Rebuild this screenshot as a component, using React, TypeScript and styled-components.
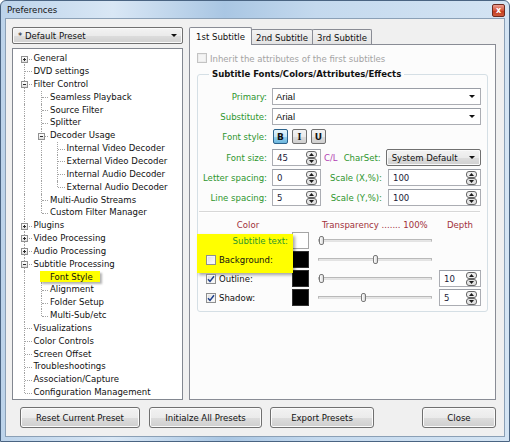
import styled, { createGlobalStyle } from 'styled-components';

const FONT = `"DejaVu Sans Condensed", "DejaVu Sans", "Liberation Sans", sans-serif`;

const GlobalStyle = createGlobalStyle`
  * { box-sizing: border-box; }
  html, body { margin: 0; padding: 0; background: #ffffff; }
  body { font-family: ${FONT}; font-size: 9.5px; color: #111111; }
`;

type Node = { level: number; label: string; toggle?: 'plus' | 'minus'; marked?: boolean };

const TREE: Node[] = [
  { level: 0, label: 'General', toggle: 'plus' },
  { level: 0, label: 'DVD settings' },
  { level: 0, label: 'Filter Control', toggle: 'minus' },
  { level: 1, label: 'Seamless Playback' },
  { level: 1, label: 'Source Filter' },
  { level: 1, label: 'Splitter' },
  { level: 1, label: 'Decoder Usage', toggle: 'minus' },
  { level: 2, label: 'Internal Video Decoder' },
  { level: 2, label: 'External Video Decoder' },
  { level: 2, label: 'Internal Audio Decoder' },
  { level: 2, label: 'External Audio Decoder' },
  { level: 1, label: 'Multi-Audio Streams' },
  { level: 1, label: 'Custom Filter Manager' },
  { level: 0, label: 'Plugins', toggle: 'plus' },
  { level: 0, label: 'Video Processing', toggle: 'plus' },
  { level: 0, label: 'Audio Processing', toggle: 'plus' },
  { level: 0, label: 'Subtitle Processing', toggle: 'minus' },
  { level: 1, label: 'Font Style', marked: true },
  { level: 1, label: 'Alignment' },
  { level: 1, label: 'Folder Setup' },
  { level: 1, label: 'Multi-Sub/etc' },
  { level: 0, label: 'Visualizations' },
  { level: 0, label: 'Color Controls' },
  { level: 0, label: 'Screen Offset' },
  { level: 0, label: 'Troubleshootings' },
  { level: 0, label: 'Association/Capture' },
  { level: 0, label: 'Configuration Management' },
];

// does the row at idx have a later sibling (same level, same parent)?
const hasNext = (idx: number) => {
  const lv = TREE[idx].level;
  for (let j = idx + 1; j < TREE.length; j++) {
    if (TREE[j].level < lv) return false;
    if (TREE[j].level === lv) return true;
  }
  return false;
};

const ancestorGoesOn = (idx: number, level: number) => {
  let a = idx - 1;
  while (a >= 0 && TREE[a].level !== level) a--;
  return a >= 0 && hasNext(a);
};

const COLOR_ROWS = [
  { label: 'Subtitle text:', check: null as boolean | null, swatch: '#ffffff', pos: 0, depth: '' },
  { label: 'Background:', check: false, swatch: '#000000', pos: 47, depth: '' },
  { label: 'Outline:', check: true, swatch: '#000000', pos: 0, depth: '10' },
  { label: 'Shadow:', check: true, swatch: '#000000', pos: 37, depth: '5' },
];

const Window = styled.div`
  width: 510px;
  height: 442px;
  display: flex;
  flex-direction: column;
  border: 1px solid #4a6482;
  border-radius: 6px 6px 0 0;
  padding: 0 4px 4px 4px;
  background: linear-gradient(90deg, #bcd3ea 0%, #d9e7f5 22%, #a9c6e3 44%, #c4d9ee 62%, #d4e4f3 100%);
`;

const TitleBar = styled.div`
  height: 17px;
  display: flex;
  align-items: flex-start;
  justify-content: space-between;
  padding: 3px 0 0 2px;
`;

const Title = styled.span`
  font-size: 9.5px;
  color: #111;
`;

const CloseButton = styled.span`
  width: 13px;
  height: 13px;
  display: flex;
  align-items: center;
  justify-content: center;
  border: 1px solid #6e2b20;
  border-radius: 2px;
  background: linear-gradient(#eba093, #d5553a 50%, #c23a1c 51%, #cf5a3c);
  color: #fff;
  font-family: "DejaVu Sans", sans-serif;
  font-size: 8px;
  font-weight: bold;
  line-height: 1;
`;

const Client = styled.div`
  flex: 1;
  display: flex;
  flex-direction: column;
  gap: 7px;
  padding: 8px 8px 8px 6px;
  background: #f0f0f0;
  border: 1px solid #8ba0b6;
`;

const MainRow = styled.div`
  flex: 1;
  display: flex;
  gap: 6px;
  min-height: 0;
`;

const LeftColumn = styled.div`
  width: 171px;
  display: flex;
  flex-direction: column;
  gap: 4px;
`;

const Arrow = styled.span`
  width: 0;
  height: 0;
  border-left: 3px solid transparent;
  border-right: 3px solid transparent;
  border-top: 3px solid #111;
`;

const ButtonCombo = styled.div<{ $ml?: number }>`
  flex: 1;
  height: 17px;
  margin-left: ${p => p.$ml ?? 0}px;
  display: flex;
  align-items: center;
  justify-content: space-between;
  padding: 0 5px;
  border: 1px solid #707070;
  border-radius: 2px;
  background: linear-gradient(#f3f3f3 0%, #ebebeb 50%, #dddddd 51%, #d0d0d0 100%);
  box-shadow: inset 0 0 0 1px #fafafa;
  color: #111;
`;

const TextCombo = styled.div`
  flex: 1;
  height: 17px;
  display: flex;
  align-items: center;
  justify-content: space-between;
  padding: 0 5px 0 3px;
  background: #ffffff;
  border: 1px solid #abadb3;
  border-top-color: #9a9ea6;
  color: #111;
  font-family: "Liberation Sans", sans-serif;
`;

const TreeBox = styled.div`
  flex: 1;
  background: #ffffff;
  border: 1px solid #828790;
  padding: 3px 0 0 3px;
`;

const TreeRow = styled.div`
  height: 12.85px;
  display: flex;
  align-items: stretch;
  line-height: 12.85px;
  white-space: nowrap;
`;

const Guide = styled.span<{ $up?: boolean; $down?: boolean; $branch?: boolean }>`
  position: relative;
  flex: none;
  width: 16.5px;

  &::before {
    content: '';
    display: ${p => (p.$up || p.$down ? 'block' : 'none')};
    position: absolute;
    left: 8px;
    top: ${p => (p.$up ? '0' : '50%')};
    bottom: ${p => (p.$down ? '0' : '50%')};
    border-left: 1px dotted #a3a3a3;
  }

  &::after {
    content: '';
    display: ${p => (p.$branch ? 'block' : 'none')};
    position: absolute;
    left: 9px;
    right: 1px;
    top: 50%;
    border-top: 1px dotted #a3a3a3;
  }
`;

const Expander = styled.span<{ $open: boolean }>`
  position: absolute;
  z-index: 1;
  left: 5px;
  top: calc(50% - 3px);
  width: 7px;
  height: 7px;
  border: 1px solid #919191;
  background: linear-gradient(#ffffff, #dedede);

  &::before {
    content: '';
    position: absolute;
    left: 1px;
    right: 1px;
    top: 2px;
    border-top: 1px solid #2b2b2b;
  }

  &::after {
    content: '';
    display: ${p => (p.$open ? 'none' : 'block')};
    position: absolute;
    top: 1px;
    bottom: 1px;
    left: 2px;
    border-left: 1px solid #2b2b2b;
  }
`;

const TreeLabel = styled.span<{ $marked?: boolean }>`
  position: relative;
  z-index: 2;
  padding-left: 1px;
  color: #111;
  ${p =>
    p.$marked &&
    `
    align-self: center;
    height: 11px;
    line-height: 11px;
    margin-left: -9px;
    padding: 0 7px 0 10px;
    background: #ffff00;
    box-shadow: 2px 2px 2px rgba(0, 0, 0, 0.3);
  `}
`;

const RightColumn = styled.div`
  flex: 1;
  display: flex;
  flex-direction: column;
`;

const TabStrip = styled.div`
  height: 17px;
  display: flex;
  align-items: flex-end;
  position: relative;
  z-index: 1;
`;

const Tab = styled.div<{ $active?: boolean; $w: number }>`
  width: ${p => p.$w}px;
  height: ${p => (p.$active ? 18 : 15)}px;
  margin-bottom: ${p => (p.$active ? -1 : 0)}px;
  margin-left: ${p => (p.$active ? 0 : -1)}px;
  display: flex;
  align-items: center;
  justify-content: center;
  padding-top: ${p => (p.$active ? 0 : 1)}px;
  border: 1px solid #898c95;
  border-bottom: none;
  border-radius: 2px 2px 0 0;
  background: ${p => (p.$active ? '#fcfcfc' : 'linear-gradient(#f3f3f3, #e3e3e3)')};
  color: #111;

  &:first-child {
    margin-left: 0;
  }
`;

const TabPanel = styled.div`
  flex: 1;
  display: flex;
  flex-direction: column;
  padding: 8px 7px 0 7px;
  background: #fcfcfc;
  border: 1px solid #898c95;
`;

const CheckRow = styled.label<{ $disabled?: boolean }>`
  display: flex;
  align-items: center;
  gap: 3px;
  height: 10px;
  color: ${p => (p.$disabled ? '#a3a3a3' : '#111')};
`;

const Box = styled.span<{ $disabled?: boolean }>`
  width: 10px;
  height: 10px;
  flex: none;
  display: flex;
  align-items: center;
  justify-content: center;
  border: 1px solid ${p => (p.$disabled ? '#c3c3c3' : '#8e8f8f')};
  background: ${p => (p.$disabled ? '#f4f4f4' : 'linear-gradient(135deg, #dcdcdc, #ffffff)')};
  box-shadow: inset 0 0 0 1px ${p => (p.$disabled ? '#ececec' : '#f4f4f4')};
`;

const GroupBox = styled.fieldset`
  margin: 5px 0 0 0;
  padding: 0 6px 4px 0;
  min-width: 0;
  border: 1px solid #d5dfe5;
  border-radius: 3px;
`;

const Legend = styled.legend`
  margin-left: 11px;
  padding: 0 3px;
  line-height: 12px;
  font-weight: bold;
  font-size: 9.5px;
  color: #111;
`;

const FieldRow = styled.div<{ $top: number; $h?: number }>`
  display: flex;
  align-items: center;
  height: ${p => p.$h ?? 17}px;
  margin-top: ${p => p.$top}px;
`;

const FieldLabel = styled.span<{ $w?: number; $gap?: number }>`
  flex: none;
  width: ${p => p.$w ?? 69}px;
  margin-right: ${p => p.$gap ?? 5}px;
  text-align: right;
  color: #2e962e;
  white-space: nowrap;
`;

const StyleRow = styled.div`
  display: flex;
  gap: 4px;
  padding-left: 1px;
`;

const StyleButton = styled.span<{ $pressed?: boolean; $serif?: boolean }>`
  width: 15px;
  height: 15px;
  display: flex;
  align-items: center;
  justify-content: center;
  border: 1px solid ${p => (p.$pressed ? '#2c628b' : '#707070')};
  border-radius: 2px;
  background: ${p =>
    p.$pressed
      ? 'linear-gradient(#e5f4fc 0%, #c4e5f6 50%, #98d1ef 51%, #6cb6dd 100%)'
      : 'linear-gradient(#f3f3f3 0%, #ebebeb 50%, #dddddd 51%, #cfcfcf 100%)'};
  font-family: ${p => (p.$serif ? '"Liberation Serif", serif' : '"DejaVu Sans", sans-serif')};
  font-weight: bold;
  font-size: ${p => (p.$serif ? 10 : 9)}px;
  color: #111;
`;

const SpinField = styled.div<{ $w?: number }>`
  height: 17px;
  ${p => (p.$w ? `width: ${p.$w}px; flex: none;` : 'flex: 1;')}
  display: flex;
  align-items: center;
  justify-content: space-between;
  padding: 0 3px 0 4px;
  background: #ffffff;
  border: 1px solid #abadb3;
  border-top-color: #9a9ea6;
  color: #1a1a38;
`;

const Note = styled.span<{ $color: string; $left: number }>`
  margin-left: ${p => p.$left}px;
  color: ${p => p.$color};
  white-space: nowrap;
`;

const Separator = styled.div`
  margin: 5px 1px 0 1px;
  height: 2px;
  border-top: 1px solid #d7d7d7;
  border-bottom: 1px solid #ffffff;
`;

const ColorGrid = styled.div`
  position: relative;
  margin-top: 5px;
  display: grid;
  grid-template-columns: 94px 26px 121px 42px;
  grid-template-rows: 13px repeat(4, 19px);
  align-items: center;
`;

const Head = styled.span<{ $align: 'left' | 'center'; $pad?: number }>`
  text-align: ${p => p.$align};
  padding-left: ${p => p.$pad ?? 0}px;
  color: #a1303a;
  white-space: nowrap;
`;

const Highlight = styled.div`
  position: absolute;
  left: -1px;
  top: 16px;
  width: 96px;
  height: 39px;
  background: #ffff00;
  box-shadow: 2px 2px 3px rgba(0, 0, 0, 0.35);
`;

const ColorLabel = styled.div<{ $right?: boolean }>`
  position: relative;
  z-index: 2;
  display: flex;
  align-items: center;
  gap: 3px;
  justify-content: ${p => (p.$right ? 'flex-end' : 'flex-start')};
  padding: ${p => (p.$right ? '0 4px 0 0' : '0 0 0 8px')};
  color: ${p => (p.$right ? '#2e962e' : '#111')};
  white-space: nowrap;
`;

const Swatch = styled.span<{ $fill: string }>`
  width: 17px;
  height: 17px;
  background: ${p => p.$fill};
  border: 1px solid ${p => (p.$fill === '#ffffff' ? '#a5a5a5' : '#303030')};
`;

const Slider = styled.div`
  position: relative;
  width: 114px;
  height: 11px;
`;

const Track = styled.span`
  position: absolute;
  left: 0;
  right: 0;
  top: 4px;
  height: 3px;
  border: 1px solid #b9b9b9;
  border-bottom-color: #e3e3e3;
  background: #e6e6e6;
`;

const Thumb = styled.span`
  position: absolute;
  top: 1px;
  width: 5px;
  height: 9px;
  margin-left: 1px;
  border: 1px solid #7a7a7a;
  border-radius: 2px;
  background: linear-gradient(90deg, #ffffff, #d8d8d8);
`;

const ButtonBar = styled.div`
  height: 21px;
  display: flex;
  padding-left: 8px;
`;

const PushButton = styled.button<{ $w: number; $gap?: number; $push?: boolean }>`
  width: ${p => p.$w}px;
  height: 21px;
  margin-left: ${p => (p.$push ? 'auto' : `${p.$gap ?? 0}px`)};
  padding: 0;
  border: 1px solid #707070;
  border-radius: 3px;
  background: linear-gradient(#f2f2f2 0%, #ebebeb 50%, #dddddd 51%, #cfcfcf 100%);
  box-shadow: inset 0 0 0 1px #fbfbfb;
  font-family: ${FONT};
  font-size: 9.5px;
  color: #111;
`;

const SpinIcon = () => (
  <svg width="11" height="14" viewBox="0 0 11 14">
    <rect x="0.5" y="0.5" width="10" height="6" rx="2.5" fill="#ececec" stroke="#666" />
    <rect x="0.5" y="7.5" width="10" height="6" rx="2.5" fill="#e2e2e2" stroke="#666" />
    <path d="M3 5 L5.5 2 L8 5 Z" fill="#1a1a1a" />
    <path d="M3 9 L5.5 12 L8 9 Z" fill="#1a1a1a" />
  </svg>
);

const Tick = () => (
  <svg width="8" height="8" viewBox="0 0 8 8">
    <path d="M1 4.2 L3 6.4 L7 1.2" fill="none" stroke="#1d3f8c" strokeWidth="1.5" />
  </svg>
);

const Spin = ({ value, w }: { value: string; w?: number }) => (
  <SpinField $w={w}>
    <span>{value}</span>
    <SpinIcon />
  </SpinField>
);

function Tree() {
  return (
    <TreeBox>
      {TREE.map((node, i) => {
        const guides = [];
        for (let k = 0; k < node.level; k++) {
          const on = ancestorGoesOn(i, k);
          guides.push(<Guide key={k} $up={on} $down={on} />);
        }
        return (
          <TreeRow key={node.label}>
            {guides}
            <Guide $up={i > 0} $down={hasNext(i)} $branch>
              {node.toggle && <Expander $open={node.toggle === 'minus'} />}
            </Guide>
            <TreeLabel $marked={node.marked}>{node.label}</TreeLabel>
          </TreeRow>
        );
      })}
    </TreeBox>
  );
}

function ColorRowCells(row: (typeof COLOR_ROWS)[number]) {
  return (
    <>
      <ColorLabel $right={row.check === null}>
        {row.check !== null && <Box>{row.check && <Tick />}</Box>}
        {row.label}
      </ColorLabel>
      <Swatch $fill={row.swatch} />
      <Slider>
        <Track />
        <Thumb style={{ left: `${row.pos}%` }} />
      </Slider>
      {row.depth ? <Spin value={row.depth} w={42} /> : <span />}
    </>
  );
}

export default function App() {
  return (
    <>
      <GlobalStyle />
      <Window>
        <TitleBar>
          <Title>Preferences</Title>
          <CloseButton>x</CloseButton>
        </TitleBar>
        <Client>
          <MainRow>
            <LeftColumn>
              <ButtonCombo>
                <span>* Default Preset</span>
                <Arrow />
              </ButtonCombo>
              <Tree />
            </LeftColumn>

            <RightColumn>
              <TabStrip>
                <Tab $active $w={63}>1st Subtitle</Tab>
                <Tab $w={62}>2nd Subtitle</Tab>
                <Tab $w={60}>3rd Subtitle</Tab>
              </TabStrip>
              <TabPanel>
                <CheckRow $disabled>
                  <Box $disabled />
                  Inherit the attributes of the first subtitles
                </CheckRow>

                <GroupBox>
                  <Legend>Subtitle Fonts/Colors/Attributes/Effects</Legend>
                  <FieldRow $top={8}>
                    <FieldLabel>Primary:</FieldLabel>
                    <TextCombo>
                      <span>Arial</span>
                      <Arrow />
                    </TextCombo>
                  </FieldRow>
                  <FieldRow $top={3}>
                    <FieldLabel>Substitute:</FieldLabel>
                    <TextCombo>
                      <span>Arial</span>
                      <Arrow />
                    </TextCombo>
                  </FieldRow>
                  <FieldRow $top={4} $h={15}>
                    <FieldLabel>Font style:</FieldLabel>
                    <StyleRow>
                      <StyleButton $pressed>B</StyleButton>
                      <StyleButton $serif>I</StyleButton>
                      <StyleButton>U</StyleButton>
                    </StyleRow>
                  </FieldRow>
                  <FieldRow $top={5}>
                    <FieldLabel>Font size:</FieldLabel>
                    <Spin value="45" w={49} />
                    <Note $color="#b23cb2" $left={3}>C/L</Note>
                    <Note $color="#2e962e" $left={6}>CharSet:</Note>
                    <ButtonCombo $ml={5}>
                      <span>System Default</span>
                      <Arrow />
                    </ButtonCombo>
                  </FieldRow>
                  <FieldRow $top={3}>
                    <FieldLabel>Letter spacing:</FieldLabel>
                    <Spin value="0" w={49} />
                    <FieldLabel $w={61} $gap={6}>Scale (X,%):</FieldLabel>
                    <Spin value="100" />
                  </FieldRow>
                  <FieldRow $top={3}>
                    <FieldLabel>Line spacing:</FieldLabel>
                    <Spin value="5" w={49} />
                    <FieldLabel $w={61} $gap={6}>Scale (Y,%):</FieldLabel>
                    <Spin value="100" />
                  </FieldRow>

                  <Separator />

                  <ColorGrid>
                    <Head $align="center" $pad={6}>Color</Head>
                    <span />
                    <Head $align="left" $pad={4}>Transparency ....... 100%</Head>
                    <Head $align="center">Depth</Head>
                    <Highlight />
                    {COLOR_ROWS.map(row => (
                      <ColorRowCells key={row.label} {...row} />
                    ))}
                  </ColorGrid>
                </GroupBox>
              </TabPanel>
            </RightColumn>
          </MainRow>

          <ButtonBar>
            <PushButton $w={120}>Reset Current Preset</PushButton>
            <PushButton $w={113} $gap={9}>Initialze All Presets</PushButton>
            <PushButton $w={104} $gap={8}>Export Presets</PushButton>
            <PushButton $w={74} $push>Close</PushButton>
          </ButtonBar>
        </Client>
      </Window>
    </>
  );
}
